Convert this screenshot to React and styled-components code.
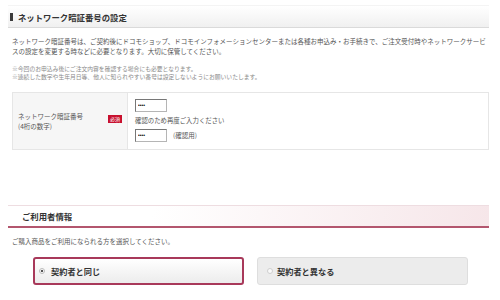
import React from 'react';
import styled, { createGlobalStyle } from 'styled-components';

const GlobalStyle = createGlobalStyle`
  html, body {
    margin: 0;
    padding: 0;
    background: #fff;
  }
  body {
    font-family: "Noto Sans CJK JP", "Noto Sans", sans-serif;
    color: #555;
  }
`

const Page = styled.div`
  width: 481px;
  padding: 5px 0 0 8px;
`

const SectionHeader = styled.h2`
  margin: 0;
  box-sizing: border-box;
  height: 23px;
  display: flex;
  align-items: center;
  gap: 5px;
  padding-left: ${p => (p.$accent ? '14px' : '2px')};
  font-size: 8.4px;
  font-weight: bold;
  color: #333;
  background: ${p =>
    p.$accent
      ? 'linear-gradient(100deg, #fff 30%, #f6e6e9 100%)'
      : 'linear-gradient(#fff, #f0f0f0)'};
  border-top: 1px solid ${p => (p.$accent ? '#eedde1' : '#f4f4f4')};
  border-bottom: ${p => (p.$accent ? '2px solid #b3566e' : '1px solid #dadada')};
`

const Mark = styled.span`
  width: 3px;
  height: 8px;
  background: #3a3a3a;
`

const TextBlock = styled.div`
  margin: ${p => p.$top}px 4px 0;
  display: flex;
  flex-direction: column;
  color: ${p => (p.$muted ? '#8a8a8a' : '#555')};
  font-size: ${p => (p.$small ? '5.8px' : '6.5px')};
`

const Line = styled.div`
  height: ${p => p.$h}px;
  line-height: ${p => p.$h}px;
  white-space: nowrap;
`

const FormTable = styled.div`
  margin: 10.5px 0 0 4px;
  width: 477px;
  height: 58px;
  box-sizing: border-box;
  display: grid;
  grid-template-columns: 115px 1fr;
  border: 1px solid #e6e6e6;
`

const LabelCell = styled.div`
  background: #f6f6f6;
  border-right: 1px solid #e6e6e6;
  display: flex;
  align-items: center;
  justify-content: space-between;
  padding: 0 5px;
  font-size: 6.5px;
  color: #555;
`

const Required = styled.span`
  background: #c8102e;
  color: #fff;
  font-size: 5px;
  line-height: 8px;
  padding: 0 2px;
  margin-top: -3px;
`

const FieldCell = styled.div`
  padding: 6px 0 0 7px;
  display: flex;
  flex-direction: column;
  align-items: flex-start;
`

const FieldRow = styled.div`
  display: flex;
  align-items: center;
  gap: 6px;
  height: 13px;
  font-size: 6.5px;
  color: #555;
`

const Pin = styled.input`
  box-sizing: border-box;
  width: 32px;
  height: 13px;
  margin: 0;
  padding: 0 2px;
  font-size: 5px;
  border: 1px solid #b5b5b5;
  border-top-color: #777;
  border-left-color: #777;
  outline: none;
  background: #fff;
`

const Hint = styled.div`
  font-size: 6.4px;
  height: 17px;
  line-height: 17px;
  color: #555;
`

const Spacer = styled.div`
  height: 55px;
`

const Choices = styled.div`
  display: flex;
  gap: 13px;
  margin: 11px 0 0 25px;
`

const Choice = styled.label`
  box-sizing: border-box;
  width: 211px;
  height: 28px;
  border-radius: 3px;
  display: flex;
  align-items: center;
  gap: ${p => (p.$selected ? '6px' : '4px')};
  padding-left: ${p => (p.$selected ? '4px' : '9px')};
  font-size: 8.2px;
  font-weight: bold;
  color: #333;
  border: ${p => (p.$selected ? '2px solid #a8395a' : '1px solid #dedede')};
  background: ${p => (p.$selected ? 'linear-gradient(#fff, #ececec)' : '#ececec')};
`

const Radio = styled.span`
  box-sizing: border-box;
  width: 6px;
  height: 6px;
  border-radius: 50%;
  border: 1px solid ${p => (p.$on ? '#bbb' : '#cfcfcf')};
  background: ${p => (p.$on ? 'radial-gradient(circle, #555 0 1.3px, #fff 1.6px)' : '#fafafa')};
`

export default function App() {
  return (
    <Page>
      <GlobalStyle />
      <SectionHeader>
        <Mark />
        ネットワーク暗証番号の設定
      </SectionHeader>
      <TextBlock $top={8}>
        <Line $h={10}>
          ネットワーク暗証番号は、ご契約後にドコモショップ、ドコモインフォメーションセンターまたは各種お申込み・お手続きで、ご注文受付時やネットワークサービ
        </Line>
        <Line $h={10}>スの設定を変更する時などに必要となります。大切に保管してください。</Line>
      </TextBlock>
      <TextBlock $top={9} $small $muted>
        <Line $h={8}>※今回のお申込み後にご注文内容を確認する場合にも必要となります。</Line>
        <Line $h={8}>※連続した数字や生年月日等、他人に知られやすい番号は設定しないようにお願いいたします。</Line>
      </TextBlock>
      <FormTable>
        <LabelCell>
          <div>
            <Line $h={10}>ネットワーク暗証番号</Line>
            <Line $h={10}>(4桁の数字)</Line>
          </div>
          <Required>必須</Required>
        </LabelCell>
        <FieldCell>
          <Pin type="password" value="1234" readOnly />
          <Hint>確認のため再度ご入力ください</Hint>
          <FieldRow>
            <Pin type="password" value="1234" readOnly />
            (確認用)
          </FieldRow>
        </FieldCell>
      </FormTable>
      <Spacer />
      <SectionHeader $accent>ご利用者情報</SectionHeader>
      <TextBlock $top={8}>
        <Line $h={10}>ご購入商品をご利用になられる方を選択してください。</Line>
      </TextBlock>
      <Choices>
        <Choice $selected>
          <Radio $on />
          契約者と同じ
        </Choice>
        <Choice>
          <Radio />
          契約者と異なる
        </Choice>
      </Choices>
    </Page>
  );
}
